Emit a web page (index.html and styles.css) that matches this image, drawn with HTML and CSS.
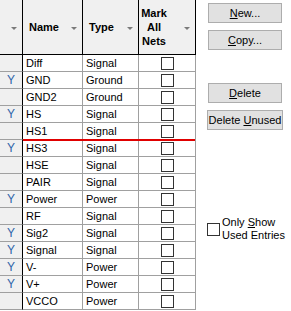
FILE: index.html
```html
<!DOCTYPE html>
<html lang="en">
<head>
    <meta charset="utf-8">
    <title>Net Types</title>
    <link rel="stylesheet" href="styles.css">
</head>
<body>
    <div class="dialog">
        <div class="grid">
            <div class="hd"><span class="arrow"></span></div>
            <div class="hd">Name<span class="arrow"></span></div>
            <div class="hd">Type<span class="arrow"></span></div>
            <div class="hd hd-mark"><span class="mark-text">Mark All Nets</span><span class="arrow"></span></div>

            <div class="sel"></div><div class="cell">Diff</div><div class="cell">Signal</div><div class="cell chk"><span class="box"></span></div>
            <div class="sel">Y</div><div class="cell">GND</div><div class="cell">Ground</div><div class="cell chk"><span class="box"></span></div>
            <div class="sel"></div><div class="cell">GND2</div><div class="cell">Ground</div><div class="cell chk"><span class="box"></span></div>
            <div class="sel">Y</div><div class="cell">HS</div><div class="cell">Signal</div><div class="cell chk"><span class="box"></span></div>
            <div class="sel"></div><div class="cell">HS1</div><div class="cell">Signal</div><div class="cell chk"><span class="box"></span></div>
            <div class="sel">Y</div><div class="cell">HS3</div><div class="cell">Signal</div><div class="cell chk"><span class="box"></span></div>
            <div class="sel"></div><div class="cell">HSE</div><div class="cell">Signal</div><div class="cell chk"><span class="box"></span></div>
            <div class="sel"></div><div class="cell">PAIR</div><div class="cell">Signal</div><div class="cell chk"><span class="box"></span></div>
            <div class="sel">Y</div><div class="cell">Power</div><div class="cell">Power</div><div class="cell chk"><span class="box"></span></div>
            <div class="sel"></div><div class="cell">RF</div><div class="cell">Signal</div><div class="cell chk"><span class="box"></span></div>
            <div class="sel">Y</div><div class="cell">Sig2</div><div class="cell">Signal</div><div class="cell chk"><span class="box"></span></div>
            <div class="sel">Y</div><div class="cell">Signal</div><div class="cell">Signal</div><div class="cell chk"><span class="box"></span></div>
            <div class="sel">Y</div><div class="cell">V-</div><div class="cell">Power</div><div class="cell chk"><span class="box"></span></div>
            <div class="sel">Y</div><div class="cell">V+</div><div class="cell">Power</div><div class="cell chk"><span class="box"></span></div>
            <div class="sel"></div><div class="cell">VCCO</div><div class="cell">Power</div><div class="cell chk"><span class="box"></span></div>

            <div class="drop-line"></div>
        </div>

        <div class="side">
            <button class="btn"><u>N</u>ew...</button>
            <button class="btn btn-gap"><u>C</u>opy...</button>
            <button class="btn btn-group"><u>D</u>elete</button>
            <button class="btn btn-gap btn-wide">Delete <u>U</u>nused</button>
            <label class="only-used">
                <span class="box"></span>
                <span class="only-used-text">Only <u>S</u>how<br>Used Entries</span>
            </label>
        </div>
    </div>
</body>
</html>
```

FILE: styles.css
```css
body {
    margin: 0;
    background: #fff;
    font-family: "Liberation Sans", Arial, sans-serif;
    font-size: 11px;
    color: #000;
}
.dialog {
    display: flex;
    align-items: flex-start;
}
.grid {
    position: relative;
    display: grid;
    grid-template-columns: 23px 60px 56px 57px;
    grid-template-rows: 55px;
    grid-auto-rows: 17px;
}
.grid > div {
    box-sizing: border-box;
}
.hd {
    display: flex;
    align-items: center;
    padding-left: 6px;
    background: #f0f0f0;
    border-right: 1px solid #000;
    border-bottom: 1px solid #000;
    font-weight: bold;
}
.hd-mark {
    padding-left: 0;
}
.mark-text {
    width: 30px;
    text-align: center;
    line-height: 14px;
}
.arrow {
    margin-left: auto;
    margin-right: 5px;
    margin-top: 2px;
    border-left: 3px solid transparent;
    border-right: 3px solid transparent;
    border-top: 3px solid #7a7a7a;
}
.sel {
    background: #f0f0f0;
    border-right: 1px solid #000;
    border-bottom: 1px solid #a0a0a0;
    color: #2f64a8;
    text-align: center;
    line-height: 16px;
    font-size: 12px;
}
.cell {
    padding-left: 3px;
    line-height: 16px;
    border-right: 1px solid #a0a0a0;
    border-bottom: 1px solid #a0a0a0;
    white-space: nowrap;
}
.chk {
    display: flex;
    justify-content: center;
    align-items: center;
    padding-left: 0;
}
.box {
    display: inline-block;
    flex-shrink: 0;
    box-sizing: border-box;
    width: 13px;
    height: 13px;
    border: 1px solid #333;
    background: #fff;
}
.drop-line {
    position: absolute;
    top: 139px;
    left: 23px;
    width: 172px;
    height: 2px;
    background: #e00000;
}
.side {
    display: flex;
    flex-direction: column;
    align-items: flex-start;
    padding-left: 12px;
}
.btn {
    width: 74px;
    height: 20px;
    margin-top: 3px;
    padding: 0;
    background: #e1e1e1;
    border: 1px solid #adadad;
    font-family: inherit;
    font-size: 11px;
    color: #000;
}
.btn-gap {
    margin-top: 7px;
}
.btn-group {
    margin-top: 33px;
}
.btn-wide {
    width: 76px;
    margin-left: -1px;
}
.only-used {
    display: flex;
    align-items: center;
    margin-top: 86px;
    margin-left: -1px;
}
.only-used-text {
    margin-left: 2px;
    line-height: 13px;
    white-space: nowrap;
}
```
